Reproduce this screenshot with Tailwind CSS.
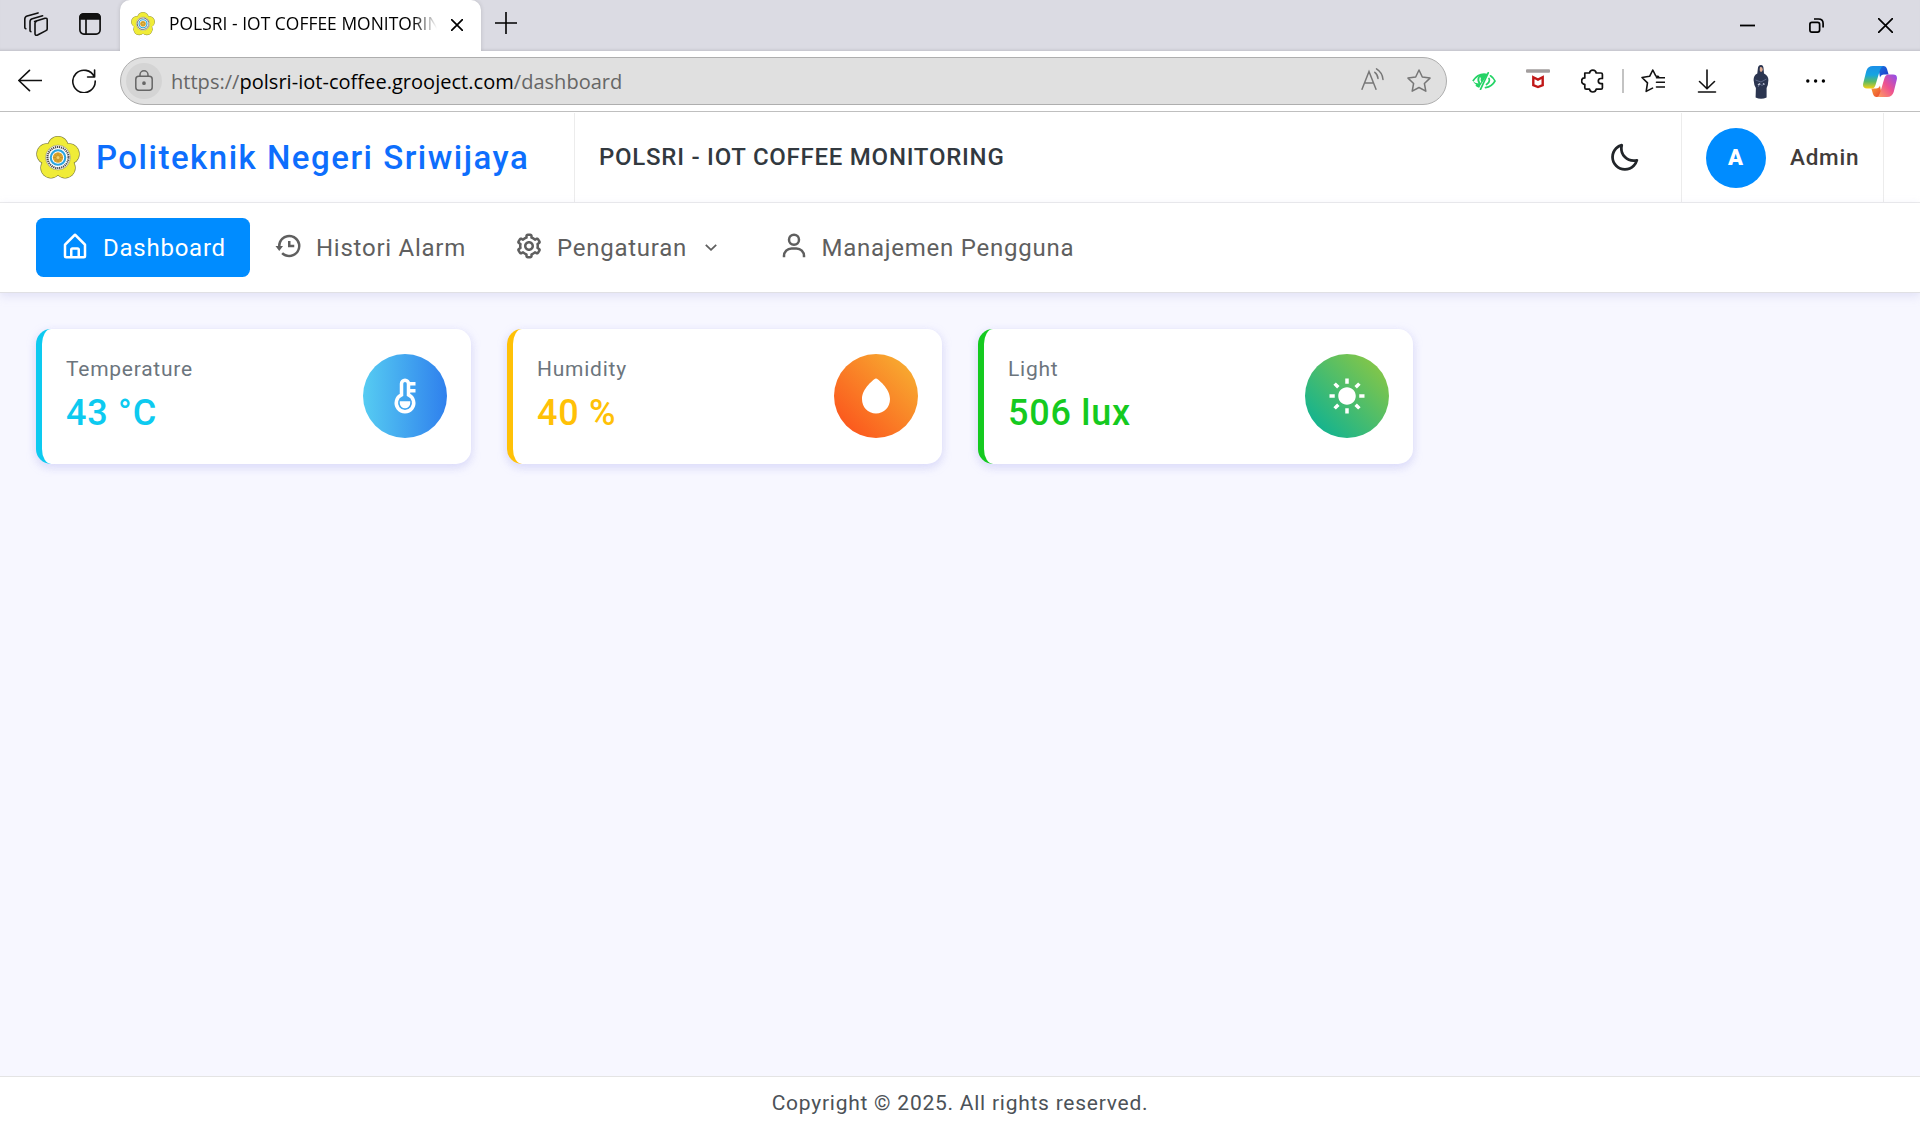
<!DOCTYPE html>
<html lang="id">
<head>
<meta charset="utf-8">
<title>POLSRI - IOT COFFEE MONITORING</title>
<script src="https://cdn.jsdelivr.net/npm/@tailwindcss/browser@4"></script>
</head>
<body class="flex h-screen w-screen flex-col overflow-hidden bg-white font-['Roboto',sans-serif] text-black">

<!-- Shared emblem -->
<svg class="hidden">
  <symbol id="emblem" viewBox="-23 -22.5 46 46">
    <g fill="#77763f">
      <circle cx="0" cy="-11.4" r="11.1"/><circle cx="11.6" cy="-3.8" r="11.1"/><circle cx="7.4" cy="10.8" r="11.1"/><circle cx="-7.4" cy="10.8" r="11.1"/><circle cx="-11.6" cy="-3.8" r="11.1"/>
    </g>
    <g fill="#f0ec38">
      <circle cx="0" cy="-11.4" r="10.5"/><circle cx="11.6" cy="-3.8" r="10.5"/><circle cx="7.4" cy="10.8" r="10.5"/><circle cx="-7.4" cy="10.8" r="10.5"/><circle cx="-11.6" cy="-3.8" r="10.5"/>
      <circle r="14"/>
    </g>
    <circle r="13" fill="#fff" stroke="#8b8a55" stroke-width=".6"/>
    <circle r="11" fill="none" stroke="#4a4a4a" stroke-width="2.2" stroke-dasharray="1.3 .8"/>
    <circle r="7.6" fill="#fff" stroke="#2aa4e0" stroke-width="2.2"/>
    <circle r="5.4" fill="#dca52d"/>
    <path d="M-5 0H5M0-5V5M-3.4-3.4 3.4 3.4M3.4-3.4-3.4 3.4" stroke="#a37f25" stroke-width=".5"/>
    <circle r="1.6" fill="#f3d36a"/>
  </symbol>
</svg>

<!-- Browser tab strip -->
<div class="flex h-[51px] shrink-0 bg-[#dbdbe3] shadow-[inset_0_-3px_3px_-2px_rgba(0,0,0,0.12)]">
  <div class="flex w-30 items-center gap-[31px] pb-[3px] pl-6">
    <svg class="size-6" viewBox="0 0 24 24" fill="none" stroke="#111" stroke-width="1.6" stroke-linejoin="round" stroke-linecap="round">
      <path d="M10.6 9.6 21 6.3q2.2-.5 2.2 1.6v9q0 1.2-1.2 1.7l-8.4 4.4q-2.6 1-2.6-1.6v-10q0-1.4 1.2-1.8z"/>
      <path d="M18.6 3.8 8.300 6.800Q6 7.500 6 9.700v8.800q0 .8.800 1.100"/>
      <path d="M14 .9 3.200 4Q.8 4.700.8 7v8.500q0 .9 1 1.200"/>
    </svg>
    <svg class="size-[22px]" viewBox="0 0 22 22" fill="none" stroke="#111" stroke-width="1.7"><rect x=".9" y=".9" width="20.2" height="20.2" rx="4"/><path d="M1 6h20V4.500Q21 1 17.500 1h-13Q1 1 1 4.500z" fill="#111"/><path d="M7 6v15"/></svg>
  </div>
  <div class="flex w-[361px] items-center rounded-t-[10px] bg-white pb-[3px] pl-[11px] shadow-[0_0_4px_rgba(0,0,0,0.15)]">
    <svg class="size-6"><use href="#emblem"/></svg>
    <div class="-mt-px ml-3.5 w-[268px] overflow-hidden bg-linear-to-r from-black from-91% to-transparent bg-clip-text whitespace-nowrap font-['Open_Sans',sans-serif] text-[17.4px] tracking-[0.04px] text-transparent">POLSRI - IOT COFFEE MONITORING</div>
    <svg class="mt-0.5 ml-3.5 size-3" viewBox="0 0 12 12" stroke="#000" stroke-width="1.7" stroke-linecap="round"><path d="M.5.5 11.500 11.500M11.500.5.5 11.500"/></svg>
  </div>
  <svg class="mt-3 ml-3.5 size-[22px]" viewBox="0 0 22 22" stroke="#000" stroke-width="1.6"><path d="M0 11h22M11 0v22"/></svg>
  <div class="ml-auto flex items-center gap-[54px] pr-[27px]">
    <svg class="h-4 w-[15px]" viewBox="0 0 15 16" stroke="#000" stroke-width="1.8"><path d="M0 7.500h15"/></svg>
    <svg class="size-[15px]" viewBox="0 0 15 15" fill="none" stroke="#000" stroke-width="1.7"><rect x=".9" y="4.400" width="9.7" height="9.7" rx="2"/><path d="M5 1h4.500q4.600 0 4.600 4.600V9.500"/></svg>
    <svg class="size-[15px]" viewBox="0 0 15 15" stroke="#000" stroke-width="1.7" stroke-linecap="round"><path d="M.6.6l13.800 13.800M14.400.6.6 14.400"/></svg>
  </div>
</div>

<!-- Browser toolbar -->
<div class="flex h-[61px] shrink-0 items-center border-b border-[#bfbfbf] bg-white pl-[18px] pr-[23px]">
  <svg class="size-6" viewBox="0 0 24 24" fill="none" stroke="#111" stroke-width="1.6" stroke-linecap="round" stroke-linejoin="round"><path d="M23.500 11.500H.8M11.500 1.300.8 11.500l10.700 10.200"/></svg>
  <svg class="ml-[30px] size-6" viewBox="0 0 24 24" fill="none" stroke="#111" stroke-width="1.6" stroke-linecap="round" stroke-linejoin="round"><path d="M22.300 8A11.200 11.200 0 1 0 23.200 12M22.600 1v7h-7"/></svg>
  <div class="ml-6 flex h-12 w-[1327px] items-center rounded-full border border-[#aeaeae] bg-[#e0e0e0] pl-[5px] pr-[15px]">
    <div class="flex size-9 items-center justify-center rounded-full bg-[#d4d4d4]">
      <svg class="-mt-0.5 h-[21px] w-[18px]" viewBox="0 0 18 21" fill="none" stroke="#666" stroke-width="1.5"><rect x=".8" y="6.200" width="16.4" height="14" rx="3"/><path d="M5 6V4.800a4 4 0 0 1 8 0V6"/><circle cx="9" cy="13.2" r="1.1" fill="#666"/></svg>
    </div>
    <div class="mt-px ml-[9px] whitespace-nowrap font-['Open_Sans',sans-serif] text-[20px] tracking-[0.03px] text-[#666]">https://<span class="text-black">polsri-iot-coffee.grooject.com</span>/dashboard</div>
    <svg class="-mt-1 ml-auto h-[22px] w-[23px]" viewBox="0 0 23 22" fill="none" stroke="#777" stroke-width="1.5" stroke-linecap="round"><path d="M1 21.200 8 3.500l7 17.700M3.500 15h9M13.800 4.300q3 2.200 3.200 6.200M15.500.8Q21.500 4.500 22 11.500"/></svg>
    <svg class="ml-[23px] size-6" viewBox="0 0 24 24" fill="none" stroke="#777" stroke-width="1.5" stroke-linejoin="round"><path d="M12 1l3.300 7 7.700 1.100-5.600 5.400 1.400 7.700L12 18.500l-6.800 3.700 1.400-7.700L1 9.100 8.700 8z"/></svg>
  </div>
  <svg class="ml-[25px] h-[18px] w-6" viewBox="0 0 24 18" fill="none"><path d="M.9 9Q5.500 2.200 12 2.200q1.500 0 3 .4M4 13q1.500 1.200 3.500 2" stroke="#25d366" stroke-width="1.8"/><path d="M.9 9Q2 11.500 5 13.500L7 15.500 15.500 2.500Q9 .5 6 5 4.500 8 6.500 11.500 2.500 11 .9 9z" fill="#25d366"/><path d="M8.300 5.500Q7.300 8 8.800 10.500" stroke="#fff" stroke-width="1.3"/><path d="M8.500 17.300 16.200.8M18.500 3.800Q21.500 5.800 23 9q-3 5.500-9.500 6.700M17 6.500q1.500 3.500-2.500 6" stroke="#25d366" stroke-width="1.7" stroke-linecap="round"/></svg>
  <svg class="ml-[30px] h-6 w-6" viewBox="0 0 24 24" fill="none"><rect y="0.3" width="24" height="3.4" rx="1" fill="#a39e9e"/><path d="M7.300 8.200 12 10.600l4.700-2.400v8L12 18l-4.700-1.800z" stroke="#c01818" stroke-width="2.4"/></svg>
  <svg class="ml-[31px] size-6" viewBox="0 0 24 24" fill="none" stroke="#111" stroke-width="1.7" stroke-linejoin="round"><path d="M3.800 4H8.500a3.400 3.400 0 0 1 6.700 0H20q1.400 0 1.400 1.400V9.500h-1.500a2.600 2.600 0 0 0 0 5.200h1.500v4.100q0 1.400-1.400 1.400h-4.800a3.400 3.400 0 0 1-6.700 0H5.200q-1.400 0-1.400-1.400v-3.500a3.200 3.200 0 0 1 0-6.400z"/></svg>
  <div class="ml-[17px] h-6 w-0.5 bg-[#c3c3c3]"></div>
  <svg class="ml-[17px] size-6" viewBox="0 0 24 24" fill="none" stroke="#111" stroke-width="1.6" stroke-linejoin="round" stroke-linecap="round"><path d="M17.500 7.500 14.800 7 11.800 1 8.600 7.300 1 8.500l5.500 5.400-1.300 8.500 6.300-3.300M15.500 8.800H23.500M15.500 13.300H23.500M15.500 18H23.500"/></svg>
  <svg class="ml-[30px] size-6" viewBox="0 0 24 24" fill="none" stroke="#111" stroke-width="1.6" stroke-linecap="round" stroke-linejoin="round"><path d="M12 1v18M4.500 12.500l7.500 7.300 7.500-7.300M3.500 23h17"/></svg>
  <svg class="mt-0.5 ml-[34px] h-[34px] w-4" viewBox="0 0 16 34"><path d="M8 0Q5 0 4.800 4L4.300 8.500Q.6 10 .6 15l.8 5 1.500 3L2.600 32.500q5.400 2.500 11 0L13.600 23l1.200-3 .6-5q0-4.500-4.400-6.500L10.600 4Q10.500 0 8 0z" fill="#2b3550"/><path d="M7 2.200q2.500-.5 2.800 2 0 2.300-1.700 2.800Q6 6.500 7 2.200z" fill="#e0ad93"/><path d="M2.500 15l5.500 2 5.500-3M5 22l2-3 2 1.500 2-1.500" fill="none" stroke="#5b6687" stroke-width="1"/><path d="M5 20l2-1.500M10 18.500l1.500 1" stroke="#c9cddd" stroke-width="1.5"/></svg>
  <svg class="ml-[37px] h-4 w-5" viewBox="0 0 20 16"><circle cx="1.8" cy="8" r="1.7"/><circle cx="9.6" cy="8" r="1.7"/><circle cx="17.4" cy="8" r="1.7"/></svg>
  <svg class="ml-auto h-[31px] w-[34px]" viewBox="0 0 34 31">
    <defs>
      <linearGradient id="ca" x1="0" y1="0" x2="0" y2="1"><stop offset="0" stop-color="#1b8fe8"/><stop offset=".4" stop-color="#16a5e0"/><stop offset=".7" stop-color="#5dbb63"/><stop offset="1" stop-color="#f9d013"/></linearGradient>
      <linearGradient id="cb" x1="1" y1="0" x2="0" y2="1"><stop offset="0" stop-color="#8c4ef0"/><stop offset=".5" stop-color="#ee5290"/><stop offset="1" stop-color="#ffa35c"/></linearGradient>
      <linearGradient id="cc" x1="0" y1="0" x2="1" y2="1"><stop offset="0" stop-color="#1478e0"/><stop offset="1" stop-color="#2335c9"/></linearGradient>
      <linearGradient id="cd" x1="0" y1="0" x2="1" y2="1"><stop offset="0" stop-color="#f8a13a"/><stop offset="1" stop-color="#ea4030"/></linearGradient>
    </defs>
    <path d="M15 0h5.500Q23 0 24 3l1.600 5.500H21q-3 0-4 3z" fill="url(#cc)"/>
    <path d="M19 31h-5.500Q11 31 10 28l-1.600-5.500H13q3 0 4-3z" fill="url(#cd)"/>
    <path d="M10 0h10q-2 .8-3 4l-4.500 15q-1 3.500-4 3.500H4q-5 0-3.700-5.500l3-12Q4.800 0 10 0z" fill="url(#ca)"/>
    <path d="M24 31H14q2-.8 3-4l4.500-15q1-3.500 4-3.500H30q5 0 3.700 5.500l-3 12Q29.200 31 24 31z" fill="url(#cb)"/>
  </svg>
</div>

<!-- Site header -->
<header class="flex h-[91px] shrink-0 border-b border-[#ececec] pt-px">
  <div class="ml-9 flex w-[539px] items-center border-r border-[#ececec]">
    <svg class="-ml-px h-11 w-[46px]"><use href="#emblem"/></svg>
    <div class="ml-[15px] whitespace-nowrap text-[33px] font-medium tracking-[1.5px] text-[#0d6efd]">Politeknik Negeri Sriwijaya</div>
  </div>
  <div class="mb-0.5 ml-6 flex items-center whitespace-nowrap text-[24px] font-medium tracking-[0.75px] text-[#32393f]">POLSRI - IOT COFFEE MONITORING</div>
  <div class="ml-auto flex items-center pr-10">
    <svg class="size-[33px]" viewBox="0 0 24 24" fill="#212529"><path d="M20.742 13.045a8.088 8.088 0 0 1-2.077.271c-2.135 0-4.140-.830-5.646-2.336a8.025 8.025 0 0 1-2.064-7.723A1 1 0 0 0 9.730 2.034a10.014 10.014 0 0 0-4.489 2.582c-3.898 3.898-3.898 10.243 0 14.143a9.937 9.937 0 0 0 7.072 2.930 9.930 9.930 0 0 0 7.070-2.929 10.007 10.007 0 0 0 2.583-4.491 1.001 1.001 0 0 0-1.224-1.224zm-2.772 4.301a7.947 7.947 0 0 1-5.656 2.343 7.953 7.953 0 0 1-5.658-2.344c-3.118-3.119-3.118-8.195 0-11.314a7.923 7.923 0 0 1 2.060-1.483 10.027 10.027 0 0 0 2.890 7.848 9.972 9.972 0 0 0 7.848 2.891 8.036 8.036 0 0 1-1.484 2.059z"/></svg>
  </div>
  <div class="mr-9 flex w-[203px] items-center border-x border-[#ececec] pl-6">
    <div class="flex size-15 items-center justify-center rounded-full bg-[#008cff] text-[22px] font-black text-white"><span class="-ml-px">A</span></div>
    <div class="ml-6 text-[22.5px] font-medium tracking-[0.75px] text-[#413c3a]">Admin</div>
  </div>
</header>

<!-- Navigation -->
<nav class="relative flex h-[90px] shrink-0 items-center border-b border-[#e0e0e4] bg-white pl-9 text-[24px] tracking-[0.75px] text-[#5f5f5f] shadow-[0_3px_9px_rgba(190,190,230,0.4)]">
  <a class="flex h-[59px] w-[214px] items-center gap-[13px] rounded-[7.5px] bg-[#008cff] pl-6 text-white">
    <svg class="-mt-[3px] size-[30px]" viewBox="0 0 24 24" fill="currentColor"><path d="M5 22h14a2 2 0 0 0 2-2v-9a1 1 0 0 0-.290-.710l-8-8a1 1 0 0 0-1.410 0l-8 8A1 1 0 0 0 3 11v9a2 2 0 0 0 2 2zm5-2v-5h4v5zm-5-8.590 7-7 7 7V20h-3v-5a2 2 0 0 0-2-2h-4a2 2 0 0 0-2 2v5H5z"/></svg>
    <span>Dashboard</span>
  </a>
  <a class="flex w-[240.5px] items-center gap-[13px] pl-[23px]">
    <svg class="-mt-[3px] size-[30px]" viewBox="0 0 24 24" fill="currentColor"><path d="M12 8v5h5v-2h-3V8z"/><path d="M21.292 8.497a8.957 8.957 0 0 0-1.928-2.862 9.004 9.004 0 0 0-4.550-2.452 9.090 9.090 0 0 0-3.626 0 8.965 8.965 0 0 0-4.552 2.453 9.048 9.048 0 0 0-1.928 2.860A8.963 8.963 0 0 0 4 12l.001.025H2L5 16l3-3.975H6.001L6 12a6.957 6.957 0 0 1 1.195-3.913 7.066 7.066 0 0 1 1.891-1.892 7.034 7.034 0 0 1 2.503-1.054 7.003 7.003 0 0 1 8.269 5.445 7.117 7.117 0 0 1 0 2.824 6.936 6.936 0 0 1-1.054 2.503c-.250.371-.537.720-.854 1.036a7.058 7.058 0 0 1-2.225 1.501 6.980 6.980 0 0 1-1.313.408 7.117 7.117 0 0 1-2.823 0 6.957 6.957 0 0 1-2.501-1.053 7.066 7.066 0 0 1-1.037-.855l-1.414 1.414A8.985 8.985 0 0 0 13 21a9.050 9.050 0 0 0 3.503-.707 9.009 9.009 0 0 0 3.959-3.260A8.968 8.968 0 0 0 22 12a8.928 8.928 0 0 0-.708-3.503z"/></svg>
    <span class="whitespace-nowrap">Histori Alarm</span>
  </a>
  <a class="flex w-[265px] items-center gap-[13px] pl-[23.5px]">
    <svg class="-mt-[3px] size-[30px]" viewBox="0 0 24 24" fill="currentColor"><path d="M12 16c2.206 0 4-1.794 4-4s-1.794-4-4-4-4 1.794-4 4 1.794 4 4 4zm0-6c1.084 0 2 .916 2 2s-.916 2-2 2-2-.916-2-2 .916-2 2-2z"/><path d="m2.845 16.136 1 1.730c.531.917 1.809 1.261 2.730.730l.529-.306A8.100 8.100 0 0 0 9 19.402V20c0 1.103.897 2 2 2h2c1.103 0 2-.897 2-2v-.598a8.132 8.132 0 0 0 1.896-1.111l.529.306c.923.530 2.198.188 2.731-.731l.999-1.729a2.001 2.001 0 0 0-.731-2.732l-.505-.292a7.718 7.718 0 0 0 0-2.224l.505-.292a2.002 2.002 0 0 0 .731-2.732l-.999-1.729c-.531-.920-1.808-1.265-2.731-.732l-.529.306A8.100 8.100 0 0 0 15 4.598V4c0-1.103-.897-2-2-2h-2c-1.103 0-2 .897-2 2v.598a8.132 8.132 0 0 0-1.896 1.111l-.529-.306c-.924-.531-2.200-.187-2.731.732l-.999 1.729a2.001 2.001 0 0 0 .731 2.732l.505.292a7.683 7.683 0 0 0 0 2.223l-.505.292a2.003 2.003 0 0 0-.731 2.733zm3.326-2.758A5.703 5.703 0 0 1 6 12c0-.462.058-.926.170-1.378a.999.999 0 0 0-.470-1.108l-1.123-.650.998-1.729 1.145.662a.997.997 0 0 0 1.188-.142 6.071 6.071 0 0 1 2.384-1.399A1 1 0 0 0 11 5.300V4h2v1.300a1 1 0 0 0 .708.956 6.083 6.083 0 0 1 2.384 1.399.999.999 0 0 0 1.188.142l1.144-.661 1 1.729-1.124.649a1 1 0 0 0-.470 1.108c.112.452.170.916.170 1.378 0 .461-.058.925-.171 1.378a1 1 0 0 0 .471 1.108l1.123.649-.998 1.729-1.145-.661a.996.996 0 0 0-1.188.142 6.071 6.071 0 0 1-2.384 1.399A1 1 0 0 0 13 18.700l.002 1.300H11v-1.300a1 1 0 0 0-.708-.956 6.083 6.083 0 0 1-2.384-1.399.992.992 0 0 0-1.188-.141l-1.144.662-1-1.729 1.124-.651a1 1 0 0 0 .471-1.108z"/></svg>
    <span>Pengaturan</span>
    <svg class="ml-[5px] h-[7px] w-3" viewBox="0 0 12 7" fill="none" stroke="currentColor" stroke-width="1.8"><path d="M.8.8 6 5.800 11.200.8"/></svg>
  </a>
  <a class="flex items-center gap-[13px] pl-[23px]">
    <svg class="-mt-[3px] size-[30px]" viewBox="0 0 24 24" fill="currentColor"><path d="M12 2a5 5 0 1 0 5 5 5 5 0 0 0-5-5zm0 8a3 3 0 1 1 3-3 3 3 0 0 1-3 3zm9 11v-1a7 7 0 0 0-7-7h-4a7 7 0 0 0-7 7v1h2v-1a5 5 0 0 1 5-5h4a5 5 0 0 1 5 5v1z"/></svg>
    <span class="whitespace-nowrap">Manajemen Pengguna</span>
  </a>
</nav>

<!-- Sensor cards -->
<main class="flex flex-1 items-start gap-9 bg-[#f7f7ff] px-9 pt-9">
  <section class="flex h-[135px] w-[435px] items-start justify-between rounded-[15px] border-l-6 border-[#0dcaf0] bg-white px-6 pt-[25px] shadow-[0_3px_9px_rgba(218,218,253,0.65),0_3px_9px_rgba(206,206,238,0.54)]">
    <div>
      <p class="text-[21px] leading-[31px] tracking-[0.75px] text-[#6c757d]">Temperature</p>
      <p class="text-[36px] leading-[56px] font-medium tracking-[0.75px] text-[#0dcaf0]">43 °C</p>
    </div>
    <div class="flex size-21 items-center justify-center rounded-full bg-[linear-gradient(to_right,#56ccf2,#2f80ed)]">
      <svg class="size-[42px]" viewBox="0 0 24 24"><path d="M14 4h4v2h-4zM14 8h4v2h-4z" fill="#fff"/><path d="M10 5a2 2 0 0 1 4 0v6.400a5 5 0 1 1-4 0z" fill="none" stroke="#fff" stroke-width="2"/><path d="M9 15h6v1a3 3 0 0 1-6 0z" fill="#fff"/></svg>
    </div>
  </section>
  <section class="flex h-[135px] w-[435px] items-start justify-between rounded-[15px] border-l-6 border-[#ffc107] bg-white px-6 pt-[25px] shadow-[0_3px_9px_rgba(218,218,253,0.65),0_3px_9px_rgba(206,206,238,0.54)]">
    <div>
      <p class="text-[21px] leading-[31px] tracking-[0.75px] text-[#6c757d]">Humidity</p>
      <p class="text-[36px] leading-[56px] font-medium tracking-[0.75px] text-[#ffc107]">40 %</p>
    </div>
    <div class="flex size-21 items-center justify-center rounded-full bg-[linear-gradient(45deg,#fc4a1a,#f7b733)]">
      <svg class="size-[42px]" viewBox="0 0 24 24" fill="#fff"><path d="M12 22c4.636 0 8-3.468 8-8.246C20 7.522 12.882 2.400 12.579 2.185a1 1 0 0 0-1.156-.001C11.120 2.397 4 7.503 4 13.750 4 18.530 7.364 22 12 22z"/></svg>
    </div>
  </section>
  <section class="flex h-[135px] w-[435px] items-start justify-between rounded-[15px] border-l-6 border-[#15ca20] bg-white px-6 pt-[25px] shadow-[0_3px_9px_rgba(218,218,253,0.65),0_3px_9px_rgba(206,206,238,0.54)]">
    <div>
      <p class="text-[21px] leading-[31px] tracking-[0.75px] text-[#6c757d]">Light</p>
      <p class="text-[36px] leading-[56px] font-medium tracking-[0.75px] text-[#15ca20]">506 lux</p>
    </div>
    <div class="flex size-21 items-center justify-center rounded-full bg-[linear-gradient(45deg,#00b09b,#96c93d)]">
      <svg class="size-[42px]" viewBox="0 0 24 24" fill="#fff"><path d="M6.995 12c0 2.761 2.246 5.007 5.007 5.007s5.007-2.246 5.007-5.007-2.246-5.007-5.007-5.007S6.995 9.239 6.995 12zM11 19h2v3h-2zm0-17h2v3h-2zm-9 9h3v2H2zm17 0h3v2h-3zM5.637 19.778l-1.414-1.414 2.121-2.121 1.414 1.414zM16.242 6.344l2.122-2.122 1.414 1.414-2.122 2.122zM6.344 7.759 4.223 5.637l1.415-1.414 2.120 2.122zM19.778 18.364l-1.414 1.414-2.122-2.122 1.414-1.414z"/></svg>
    </div>
  </section>
</main>

<footer class="flex h-[52px] shrink-0 items-center justify-center border-t border-[#e4e4e4] bg-white pt-0.5 text-[21px] tracking-[0.75px] text-[#4c5258]">Copyright © 2025. All rights reserved.</footer>
</body>
</html>
